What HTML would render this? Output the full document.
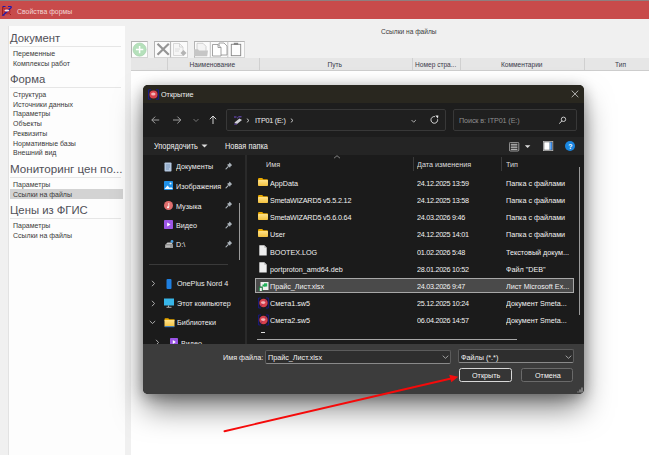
<!DOCTYPE html>
<html><head><meta charset="utf-8">
<style>
*{margin:0;padding:0;box-sizing:border-box}
html,body{width:649px;height:455px;overflow:hidden;background:#f0f0f0;font-family:"Liberation Sans",sans-serif}
.a{position:absolute}
.t{position:absolute;white-space:nowrap;line-height:10px;height:10px}
/* top */
#topline{left:0;top:0;width:649px;height:1px;background:#8f7f7f}
#title{left:0;top:1px;width:649px;height:18px;background:#c84b4b}
#lp{left:8px;top:26px;width:117px;height:429px;background:#fdfdfd;border-left:1px solid #e2e2e2}
.h{font-size:11.3px;color:#505058;line-height:14px;height:14px}
.it{font-size:7px;color:#3a3a3a}
.sep{position:absolute;height:1px;background:#e6e6e6;left:10px;width:111px}
.hd{font-size:6.6px;color:#3a3a4a}
.dt{font-size:8px;color:#f2f2f2;transform:scaleX(0.9);transform-origin:0 0}
.dd{letter-spacing:-0.3px}
</style></head><body>
<div class="a" id="topline"></div>
<div class="a" id="title"></div>
<svg class="a" style="left:0;top:0" width="16" height="18" viewBox="0 0 16 18"><path d="M2.6 7 V15.3 M3 7.5 L11 15" stroke="#9a1a1a" stroke-width="1" fill="none"/><circle cx="7" cy="11" r="3.6" fill="#b8303a"/><path d="M2.5 6.5 H5.5 M8 6.5 H11 L11.3 7.5 L3 15.3 H4.5" stroke="#1a1ab0" stroke-width="1.1" fill="none"/><ellipse cx="6.8" cy="10.6" rx="2.4" ry="1" fill="#f6e0e0"/></svg>
<div class="t" style="left:17px;top:6.5px;font-size:6.9px;color:#f3d6d6">Свойства формы</div>

<div class="a" id="lp"></div>
<div class="t h" style="left:10px;top:31px">Документ</div>
<div class="sep" style="top:46px"></div>
<div class="t it" style="left:13px;top:48.5px">Переменные</div>
<div class="t it" style="left:13px;top:58.5px">Комплексы работ</div>
<div class="t h" style="left:10px;top:72px">Форма</div>
<div class="sep" style="top:87px"></div>
<div class="t it" style="left:13px;top:90px">Структура</div>
<div class="t it" style="left:13px;top:99.7px">Источники данных</div>
<div class="t it" style="left:13px;top:109px">Параметры</div>
<div class="t it" style="left:13px;top:118.6px">Объекты</div>
<div class="t it" style="left:13px;top:128.8px">Реквизиты</div>
<div class="t it" style="left:13px;top:138.7px">Нормативные базы</div>
<div class="t it" style="left:13px;top:148.2px">Внешний вид</div>
<div class="t h" style="left:10px;top:161.5px;font-size:11.6px">Мониторинг цен по...</div>
<div class="sep" style="top:177px"></div>
<div class="t it" style="left:13px;top:179.7px">Параметры</div>
<div class="a" style="left:10px;top:189.2px;width:112.6px;height:9.6px;background:#d3d3d3"></div>
<div class="t it" style="left:13px;top:189.5px">Ссылки на файлы</div>
<div class="t h" style="left:10px;top:203px">Цены из ФГИС</div>
<div class="sep" style="top:218px"></div>
<div class="t it" style="left:13px;top:220.5px">Параметры</div>
<div class="t it" style="left:13px;top:230.6px">Ссылки на файлы</div>


<!-- main area -->
<div class="t" style="left:381px;top:26.5px;font-size:6.6px;color:#3c3c3c">Ссылки на файлы</div>
<div class="a" style="left:131px;top:41px;width:17px;height:16.8px;border:1px solid #d4d4d4;border-top-color:#b4b4b4;border-left-color:#b4b4b4;background:#fdfdfd"></div>
<div class="a" style="left:154px;top:41px;width:33.6px;height:16.8px;border:1px solid #d4d4d4;border-top-color:#b4b4b4;border-left-color:#b4b4b4;background:#fbfbfb"></div>
<div class="a" style="left:193.5px;top:41px;width:51px;height:16.8px;border:1px solid #d4d4d4;border-top-color:#b4b4b4;border-left-color:#b4b4b4;background:#fbfbfb"></div>
<svg class="a" style="left:131px;top:41px" width="114" height="17" viewBox="0 0 114 17">
  <circle cx="8.6" cy="8.6" r="6.6" fill="#b5e0bb" stroke="#9fd0a6" stroke-width="0.6"/>
  <path d="M8.6 4.9 V12.3 M4.9 8.6 H12.3" stroke="#fff" stroke-width="1.5"/>
  <path d="M39.5 0.5 V16.5" stroke="#b8b8b8" stroke-width="1.2"/>
  <path d="M79.3 0.5 V16.5 M96.8 0.5 V16.5" stroke="#c4c4c4" stroke-width="1"/>
  <path d="M26.5 2.8 L37.8 13.8 M37.8 2.8 L26.5 13.8" stroke="#959595" stroke-width="2.2"/>
  <path d="M42.5 2.5 h6 l3.5 3.5 v8.5 h-9.5z" fill="#f6f6f6" stroke="#cfcfcf" stroke-width="0.8"/>
  <path d="M48.5 2.5 v3.5 h3.5" fill="none" stroke="#cfcfcf" stroke-width="0.8"/>
  <path d="M44 8 h5 M44 10 h4" stroke="#d8d8d8" stroke-width="0.8"/>
  <path d="M52.5 9 l3 3 l-3 3 l-3 -3z" fill="#b4b4b4"/>
  <path d="M66 2.3 h6 l3 3 v6.5 h-9z" fill="#f4f4f4" stroke="#c8c8c8" stroke-width="0.8"/>
  <path d="M63 8.3 h4 l1 1.2 h9 l-0.8 5.8 h-13.2z" fill="#c6c6c6"/>
  <path d="M88 2 h5 l3 3 v9 h-8z" fill="#fff" stroke="#8e8e8e" stroke-width="0.8"/>
  <path d="M81.5 3.5 h5.5 l3 3 v8.5 h-8.5z" fill="#fff" stroke="#8e8e8e" stroke-width="0.8"/>
  <path d="M87 3.5 v3 h3" fill="none" stroke="#8e8e8e" stroke-width="0.8"/>
  <rect x="100.3" y="3.3" width="9.4" height="11.4" fill="#fdfdfd" stroke="#858585" stroke-width="0.9"/>
  <rect x="102.8" y="1.8" width="4.4" height="2.2" fill="#858585"/>
</svg>
<div class="a" style="left:131px;top:58px;width:518px;height:12.5px;background:#e6e6e6;border-bottom:1px solid #cdcdcd"></div>
<div class="a" style="left:166.5px;top:58px;width:1px;height:12px;background:#d0d0d0"></div>
<div class="a" style="left:258.5px;top:58px;width:1px;height:12px;background:#d0d0d0"></div>
<div class="a" style="left:411.5px;top:58px;width:1px;height:12px;background:#d0d0d0"></div>
<div class="a" style="left:460px;top:58px;width:1px;height:12px;background:#d0d0d0"></div>
<div class="a" style="left:583.5px;top:58px;width:1px;height:12px;background:#d0d0d0"></div>
<div class="t hd" style="left:189.5px;top:59.5px">Наименование</div>
<div class="t hd" style="left:327.5px;top:59.5px">Путь</div>
<div class="t hd" style="left:415px;top:59.5px">Номер стра...</div>
<div class="t hd" style="left:501px;top:59.5px">Комментарии</div>
<div class="t hd" style="left:615px;top:59.5px">Тип</div>
<div class="a" style="left:131px;top:71px;width:518px;height:384px;background:#fff"></div>

<!-- dialog -->
<svg width="0" height="0" style="position:absolute"><defs><linearGradient id="fg" x1="0" y1="0" x2="0" y2="1"><stop offset="0" stop-color="#ffe28a"/><stop offset="1" stop-color="#f3c13e"/></linearGradient></defs></svg>
<div id="dlg" class="a" style="left:143px;top:85px;width:441px;height:308.5px;border-radius:5px;background:#1b1b1b;overflow:hidden;box-shadow:0 16px 30px -2px rgba(0,0,0,0.5), 0 3px 14px rgba(0,0,0,0.32)">
  <div class="a" style="left:0;top:0;width:441px;height:18.4px;background:#29271f"></div>
  <svg class="a" style="left:4.5px;top:3.5px" width="11" height="11" viewBox="0 0 11 11"><path d="M0.6 0.8 V10.2 H3 M0.6 0.8 H3 M8 0.8 H10.4 V10.2 H8" stroke="#1a1a9a" stroke-width="0.9" fill="none"/><circle cx="5.5" cy="5.5" r="4" fill="#d8404c"/><ellipse cx="5.3" cy="5" rx="2.2" ry="1.5" fill="#f4b4b8"/></svg>
  <div class="t dt" style="left:18px;top:4.7px;color:#f0f0f0">Открытие</div>
  <svg class="a" style="left:428px;top:5px" width="8" height="8" viewBox="0 0 8 8"><path d="M0.7 0.6 L7.3 7.2 M7.3 0.6 L0.7 7.2" stroke="#e0e0e0" stroke-width="0.75"/></svg>

  <div class="a" style="left:0;top:18.4px;width:441px;height:33.3px;background:#1d1d1d"></div>
  <svg class="a" style="left:0;top:28px" width="84" height="14" viewBox="0 0 84 14">
    <path d="M8.8 7 h7.4 M8.8 7 l3.4 -3.4 M8.8 7 l3.4 3.4" stroke="#a0a0a0" stroke-width="1" fill="none"/>
    <path d="M30 7 h7.8 M37.8 7 l-3.4 -3.4 M37.8 7 l-3.4 3.4" stroke="#a0a0a0" stroke-width="1" fill="none"/>
    <path d="M50.5 6 l2.5 2.5 l2.5 -2.5" stroke="#8a8a8a" stroke-width="0.8" fill="none"/>
    <path d="M70 3 v8 M70 3 l-3.2 3.2 M70 3 l3.2 3.2" stroke="#e6e6e6" stroke-width="0.9" fill="none"/>
  </svg>
  <div class="a" style="left:83.4px;top:23.9px;width:219.6px;height:21.8px;border:1px solid #383838;border-radius:2px;background:#1f1f1f"></div>
  <svg class="a" style="left:90px;top:30.5px" width="10" height="9" viewBox="0 0 10 9"><path d="M1.5 6.5 L6.5 2.5 L9 4 L4 8z" fill="#d0d0d8"/><path d="M1.5 6.5 L4 8 L4 8.6 L1.5 7.2z" fill="#8a8a9a"/><path d="M1 1 h2.5 M5.5 0.8 h3" stroke="#7a52e0" stroke-width="0.9"/><path d="M4 2.2 l1.5 -1" stroke="#7a52e0" stroke-width="0.7"/><path d="M1.2 8.2 h2.5" stroke="#6a40c8" stroke-width="0.8"/></svg>
  <svg class="a" style="left:103px;top:33px" width="4" height="5" viewBox="0 0 4 5"><path d="M0.8 0.6 L3 2.5 L0.8 4.4" stroke="#d8d8d8" stroke-width="0.85" fill="none"/></svg>
  <div class="t dt" style="left:111.7px;top:30.50px;color:#ececec;letter-spacing:-0.25px">ITP01 (E:)</div>
  <svg class="a" style="left:147.3px;top:33px" width="4" height="5" viewBox="0 0 4 5"><path d="M0.8 0.6 L3 2.5 L0.8 4.4" stroke="#d8d8d8" stroke-width="0.85" fill="none"/></svg>
  <svg class="a" style="left:267px;top:30px" width="32" height="11" viewBox="0 0 32 11"><path d="M1.5 5 l2.2 2.2 l2.2 -2.2" stroke="#cfcfcf" stroke-width="0.8" fill="none"/><path d="M27.6 4.3 A3.35 3.35 0 1 1 24.9 1.6" stroke="#e2e2e2" stroke-width="0.95" fill="none"/><path d="M25.3 0.6 L28.4 0.5 L27.9 3.6z" fill="#ececec"/></svg>
  <div class="a" style="left:310px;top:23.9px;width:124px;height:21.8px;border:1px solid #383838;border-radius:2px;background:#1f1f1f"></div>
  <div class="t dt" style="left:315.5px;top:30.50px;color:#8e8e8e;letter-spacing:-0.12px">Поиск в: ITP01 (E:)</div>
  <svg class="a" style="left:414.5px;top:31px" width="9" height="9" viewBox="0 0 9 9"><circle cx="5.5" cy="3.3" r="2.2" stroke="#d8d8d8" stroke-width="0.9" fill="none"/><path d="M4 4.8 L1.2 7.6" stroke="#d8d8d8" stroke-width="1"/></svg>

  <div class="a" style="left:0;top:51.7px;width:441px;height:18.3px;background:#242424"></div>
  <div class="t dt" style="left:10.7px;top:57.4px;color:#f0f0f0;font-size:8.2px">Упорядочить</div>
  <svg class="a" style="left:57.5px;top:59px" width="7" height="4" viewBox="0 0 7 4"><path d="M0.5 0.5 h6 l-3 3z" fill="#dcdcdc"/></svg>
  <div class="t dt" style="left:81.6px;top:57.3px;color:#f0f0f0;font-size:8.2px">Новая папка</div>
  <svg class="a" style="left:365.7px;top:56.5px" width="23" height="10" viewBox="0 0 23 10"><rect x="0.4" y="0.4" width="9.4" height="8.6" rx="1" fill="none" stroke="#b8b8b8" stroke-width="0.8"/><path d="M1.8 2.3 h6.6 M1.8 4 h6.6 M1.8 5.7 h6.6 M1.8 7.4 h6.6" stroke="#d4d4d4" stroke-width="0.9"/><path d="M15.8 3.3 h5.6 l-2.8 2.8z" fill="#dcdcdc"/></svg>
  <svg class="a" style="left:399.8px;top:56.2px" width="11" height="10" viewBox="0 0 11 10"><defs><linearGradient id="pg" x1="0" x2="1"><stop offset="0" stop-color="#9fd0ff"/><stop offset="1" stop-color="#1a6fd6"/></linearGradient></defs><rect x="0.4" y="0.4" width="9.4" height="9.2" fill="#2a2a2a" stroke="#b8b8b8" stroke-width="0.8"/><rect x="1.2" y="1.2" width="5.4" height="7.6" fill="#ffffff"/><rect x="6.6" y="1.2" width="2.4" height="7.6" fill="url(#pg)"/></svg>
  <div class="a" style="left:422px;top:56.2px;width:10px;height:10px;border-radius:50%;background:#1a86e0"></div>
  <div class="t" style="left:425.3px;top:56.5px;font-size:7px;font-weight:bold;color:#fff">?</div>

  <div class="a" style="left:101.7px;top:70px;width:2.2px;height:189px;background:#2a2a2a"></div>
  <svg class="a" style="left:190px;top:70px" width="8" height="4" viewBox="0 0 8 4"><path d="M1 3.2 l3 -2.5 l3 2.5" stroke="#9a9a9a" stroke-width="0.8" fill="none"/></svg>
  <div class="t dt" style="left:122.5px;top:75.30px;color:#dcdcdc">Имя</div>
  <div class="a" style="left:269.8px;top:72px;width:1px;height:14px;background:#3a3a3a"></div>
  <div class="t dt" style="left:274px;top:75.30px;color:#dcdcdc">Дата изменения</div>
  <div class="a" style="left:358px;top:72px;width:1px;height:14px;background:#3a3a3a"></div>
  <div class="t dt" style="left:362.5px;top:75.30px;color:#dcdcdc">Тип</div>
  <div class="a" style="left:435.5px;top:81.7px;width:1.3px;height:148px;background:#9a9a9a"></div>

  <div class="a" style="left:112.3px;top:192.9px;width:318.6px;height:15px;border:1px solid #a8a8a8;background:#4a4a4a"></div>
<svg class="a" style="left:114.8px;top:92.7px" width="10" height="9" viewBox="0 0 10 9"><defs></defs><path d="M0 1.2 Q0 0 1.2 0 H4.2 L5.4 1.2 H9 Q10 1.2 10 2.2 V3 H0z" fill="#e8a800"/><rect x="0" y="2" width="10" height="6" rx="0.8" fill="url(#fg)"/></svg>
  <div class="t dt" style="left:127.2px;top:94.10px">AppData</div><div class="t dt dd" style="left:274.3px;top:94.10px">24.12.2025 13:59</div><div class="t dt" style="left:362.5px;top:94.10px">Папка с файлами</div>
<svg class="a" style="left:114.8px;top:109.8px" width="10" height="9" viewBox="0 0 10 9"><defs></defs><path d="M0 1.2 Q0 0 1.2 0 H4.2 L5.4 1.2 H9 Q10 1.2 10 2.2 V3 H0z" fill="#e8a800"/><rect x="0" y="2" width="10" height="6" rx="0.8" fill="url(#fg)"/></svg>
  <div class="t dt" style="left:127.2px;top:111.20px;letter-spacing:-0.18px">SmetaWIZARD5 v5.5.2.12</div><div class="t dt dd" style="left:274.3px;top:111.20px">24.12.2025 13:58</div><div class="t dt" style="left:362.5px;top:111.20px">Папка с файлами</div>
<svg class="a" style="left:114.8px;top:126.9px" width="10" height="9" viewBox="0 0 10 9"><defs></defs><path d="M0 1.2 Q0 0 1.2 0 H4.2 L5.4 1.2 H9 Q10 1.2 10 2.2 V3 H0z" fill="#e8a800"/><rect x="0" y="2" width="10" height="6" rx="0.8" fill="url(#fg)"/></svg>
  <div class="t dt" style="left:127.2px;top:128.30px;letter-spacing:-0.18px">SmetaWIZARD5 v5.6.0.64</div><div class="t dt dd" style="left:274.3px;top:128.30px">24.03.2026 9:46</div><div class="t dt" style="left:362.5px;top:128.30px">Папка с файлами</div>
<svg class="a" style="left:114.8px;top:144.0px" width="10" height="9" viewBox="0 0 10 9"><defs></defs><path d="M0 1.2 Q0 0 1.2 0 H4.2 L5.4 1.2 H9 Q10 1.2 10 2.2 V3 H0z" fill="#e8a800"/><rect x="0" y="2" width="10" height="6" rx="0.8" fill="url(#fg)"/></svg>
  <div class="t dt" style="left:127.2px;top:145.40px">User</div><div class="t dt dd" style="left:274.3px;top:145.40px">24.12.2025 14:01</div><div class="t dt" style="left:362.5px;top:145.40px">Папка с файлами</div>
<svg class="a" style="left:115.8px;top:160.2px" width="8" height="11" viewBox="0 0 8 11"><path d="M0.3 0.3 h5 l2.4 2.4 v7.8 h-7.4z" fill="#eeeeee"/><path d="M5.3 0.3 v2.4 h2.4z" fill="#b8b8b8"/></svg>
  <div class="t dt" style="left:127.2px;top:162.50px">BOOTEX.LOG</div><div class="t dt dd" style="left:274.3px;top:162.50px">01.02.2026 5:48</div><div class="t dt" style="left:362.5px;top:162.50px">Текстовый докум...</div>
<svg class="a" style="left:115.8px;top:177.3px" width="8" height="11" viewBox="0 0 8 11"><path d="M0.3 0.3 h5 l2.4 2.4 v7.8 h-7.4z" fill="#eeeeee"/><path d="M5.3 0.3 v2.4 h2.4z" fill="#b8b8b8"/></svg>
  <div class="t dt" style="left:127.2px;top:179.60px">portproton_amd64.deb</div><div class="t dt dd" style="left:274.3px;top:179.60px">28.01.2026 10:52</div><div class="t dt" style="left:362.5px;top:179.60px">Файл "DEB"</div>
<svg class="a" style="left:114.5px;top:195.6px" width="11" height="11" viewBox="0 0 11 11"><rect x="2.5" y="1" width="8" height="8" fill="#f0f0f0"/><path d="M4.5 5.5 h3 v-2 h-3z" fill="#1fa855"/><rect x="6" y="2.3" width="3.2" height="3.2" fill="#21b35a"/><rect x="0.8" y="5.5" width="4" height="4.5" fill="#1a7a3e"/><rect x="1.8" y="6.8" width="2" height="3.2" fill="#f0f0f0"/></svg>
  <div class="t dt" style="left:127.2px;top:196.70px">Прайс_Лист.xlsx</div><div class="t dt dd" style="left:274.3px;top:196.70px">24.03.2026 9:47</div><div class="t dt" style="left:362.5px;top:196.70px">Лист Microsoft Ex...</div>
<svg class="a" style="left:114.5px;top:212.2px" width="11" height="12" viewBox="0 0 11 12"><path d="M0.6 1 V11 H3 M0.6 1 H3 M8 1 H10.4 V11 H8" stroke="#1a1a8a" stroke-width="0.9" fill="none"/><circle cx="5.5" cy="6" r="4.2" fill="#d8404c"/><path d="M1.5 10.5 L9.5 1.5" stroke="#2a1a8a" stroke-width="0.6" opacity="0.6"/><ellipse cx="5.2" cy="5.6" rx="2.2" ry="1.4" fill="#f4b4b8"/></svg>
  <div class="t dt" style="left:127.2px;top:213.80px">Смета1.sw5</div><div class="t dt dd" style="left:274.3px;top:213.80px">25.12.2025 10:24</div><div class="t dt" style="left:362.5px;top:213.80px">Документ Smeta...</div>
<svg class="a" style="left:114.5px;top:229.3px" width="11" height="12" viewBox="0 0 11 12"><path d="M0.6 1 V11 H3 M0.6 1 H3 M8 1 H10.4 V11 H8" stroke="#1a1a8a" stroke-width="0.9" fill="none"/><circle cx="5.5" cy="6" r="4.2" fill="#d8404c"/><path d="M1.5 10.5 L9.5 1.5" stroke="#2a1a8a" stroke-width="0.6" opacity="0.6"/><ellipse cx="5.2" cy="5.6" rx="2.2" ry="1.4" fill="#f4b4b8"/></svg>
  <div class="t dt" style="left:127.2px;top:230.90px">Смета2.sw5</div><div class="t dt dd" style="left:274.3px;top:230.90px">06.04.2026 14:57</div><div class="t dt" style="left:362.5px;top:230.90px">Документ Smeta...</div>

  <div class="a" style="left:118px;top:247px;width:4px;height:1px;background:#e0e0e0"></div>
  <div class="a" style="left:114px;top:253.5px;width:260px;height:1.3px;background:#a8a8a8"></div>

  <svg class="a" style="left:21px;top:76.5px" width="8" height="10" viewBox="0 0 8 10"><rect x="0.5" y="0.5" width="7" height="9" rx="0.8" fill="#b4c8e0"/><path d="M2 3 h4 M2 5 h4 M2 7 h3" stroke="#5f7fa6" stroke-width="0.7"/></svg><div class="t dt" style="left:33px;top:77.20px;color:#ececec">Документы</div><svg class="a" style="left:82.3px;top:76.6px" width="8" height="8" viewBox="0 0 8 8"><path d="M4.6 0.6 L7.2 3.2 L5.8 4 L5 5.8 L2 2.8 L3.8 2 Z" fill="#a9b1b8"/><path d="M3.2 4.6 L1 6.8" stroke="#a9b1b8" stroke-width="1.1" stroke-linecap="round"/></svg>
<svg class="a" style="left:21px;top:95.8px" width="9" height="9" viewBox="0 0 9 9"><rect x="0" y="0" width="9" height="9" rx="0.8" fill="#1e90e8"/><path d="M0.5 8 l3 -3.5 l2.5 2.5 l1 -1 l2 2z" fill="#f0f8ff"/><circle cx="6.5" cy="2.5" r="1" fill="#e6f4ff"/></svg><div class="t dt" style="left:33px;top:96.50px;color:#ececec">Изображения</div><svg class="a" style="left:82.3px;top:95.9px" width="8" height="8" viewBox="0 0 8 8"><path d="M4.6 0.6 L7.2 3.2 L5.8 4 L5 5.8 L2 2.8 L3.8 2 Z" fill="#a9b1b8"/><path d="M3.2 4.6 L1 6.8" stroke="#a9b1b8" stroke-width="1.1" stroke-linecap="round"/></svg>
<svg class="a" style="left:21px;top:116.0px" width="9" height="9" viewBox="0 0 9 9"><circle cx="4.5" cy="4.5" r="4.5" fill="#e06e6e"/><path d="M4.8 2 v4.2" stroke="#fff" stroke-width="0.8"/><circle cx="4" cy="6.3" r="1" fill="#fff"/></svg><div class="t dt" style="left:33px;top:116.70px;color:#ececec">Музыка</div><svg class="a" style="left:82.3px;top:116.1px" width="8" height="8" viewBox="0 0 8 8"><path d="M4.6 0.6 L7.2 3.2 L5.8 4 L5 5.8 L2 2.8 L3.8 2 Z" fill="#a9b1b8"/><path d="M3.2 4.6 L1 6.8" stroke="#a9b1b8" stroke-width="1.1" stroke-linecap="round"/></svg>
<svg class="a" style="left:21px;top:135.4px" width="9" height="9" viewBox="0 0 9 9"><rect x="0" y="0" width="9" height="9" rx="0.8" fill="#9b55e6"/><path d="M3.2 2.5 l3.3 2 l-3.3 2z" fill="#fff"/></svg><div class="t dt" style="left:33px;top:136.10px;color:#ececec">Видео</div><svg class="a" style="left:82.3px;top:135.5px" width="8" height="8" viewBox="0 0 8 8"><path d="M4.6 0.6 L7.2 3.2 L5.8 4 L5 5.8 L2 2.8 L3.8 2 Z" fill="#a9b1b8"/><path d="M3.2 4.6 L1 6.8" stroke="#a9b1b8" stroke-width="1.1" stroke-linecap="round"/></svg>
<svg class="a" style="left:20.5px;top:154.5px" width="10" height="9" viewBox="0 0 10 9"><path d="M1 4.5 h8 v3.5 h-8z" fill="#9a9a9a"/><path d="M1.5 4.5 l2 -2 h4 l1.5 2" fill="#c8c8c8"/><circle cx="8" cy="1.5" r="1.4" fill="#4aa0e0"/><path d="M2 6.2 h4" stroke="#e0e0e0" stroke-width="0.7"/></svg><div class="t dt" style="left:33px;top:155.20px;color:#ececec">D:\</div><svg class="a" style="left:82.3px;top:154.6px" width="8" height="8" viewBox="0 0 8 8"><path d="M4.6 0.6 L7.2 3.2 L5.8 4 L5 5.8 L2 2.8 L3.8 2 Z" fill="#a9b1b8"/><path d="M3.2 4.6 L1 6.8" stroke="#a9b1b8" stroke-width="1.1" stroke-linecap="round"/></svg>
<div class="a" style="left:96px;top:118px;width:1.2px;height:57px;background:#9a9a9a"></div><div class="a" style="left:6.4px;top:179px;width:79px;height:1px;background:#3a3a3a"></div><svg class="a" style="left:8px;top:194.9px" width="5" height="7" viewBox="0 0 5 7"><path d="M1 0.8 l2.5 2.7 l-2.5 2.7" stroke="#cfcfcf" stroke-width="0.8" fill="none"/></svg><svg class="a" style="left:22.5px;top:193.5px" width="6" height="10" viewBox="0 0 6 10"><rect x="0.5" y="0" width="5" height="10" rx="1" fill="#1e7fe0"/></svg><div class="t dt" style="left:33.9px;top:193.7px;color:#ececec">OnePlus Nord 4</div>
<svg class="a" style="left:8px;top:214.7px" width="5" height="7" viewBox="0 0 5 7"><path d="M1 0.8 l2.5 2.7 l-2.5 2.7" stroke="#cfcfcf" stroke-width="0.8" fill="none"/></svg><svg class="a" style="left:20.5px;top:213px" width="10" height="10" viewBox="0 0 10 10"><rect x="0" y="0.5" width="10" height="7" fill="#38b6e8"/><path d="M4.5 7.5 v1.5 M2.5 9.3 h5" stroke="#cfcfcf" stroke-width="0.8"/></svg><div class="t dt" style="left:33.9px;top:213.5px;color:#ececec">Этот компьютер</div>
<svg class="a" style="left:6px;top:235.0px" width="7" height="5" viewBox="0 0 7 5"><path d="M0.8 1 l2.7 2.5 l2.7 -2.5" stroke="#cfcfcf" stroke-width="0.8" fill="none"/></svg><svg class="a" style="left:20.5px;top:233px" width="11" height="10" viewBox="0 0 11 10"><path d="M0.5 1.2 Q0.5 0.3 1.4 0.3 H4.2 L5.3 1.3 H10.5 V3 H0.5z" fill="#e8a800"/><rect x="0.5" y="2" width="10" height="6.8" rx="0.6" fill="url(#fg)"/><rect x="0.8" y="8.2" width="9.4" height="1" fill="#2a78d0"/></svg><div class="t dt" style="left:33.9px;top:233.2px;color:#ececec">Библиотеки</div>
<svg class="a" style="left:12px;top:253.5px" width="5" height="7" viewBox="0 0 5 7"><path d="M1 0.8 l2.5 2.7 l-2.5 2.7" stroke="#cfcfcf" stroke-width="0.8" fill="none"/></svg><svg class="a" style="left:27px;top:252.5px" width="8" height="8" viewBox="0 0 8 8"><rect x="0" y="0" width="8" height="8" rx="0.8" fill="#9b55e6"/><path d="M2.8 2 l3 2 l-3 2z" fill="#fff"/></svg><div class="t dt" style="left:38px;top:253.50px;color:#ececec">Видео</div>


  <div class="a" style="left:0;top:259px;width:441px;height:49.5px;background:#3c3c3c"></div>
  <div class="t dt" style="left:79.6px;top:268.10px;color:#f0f0f0">Имя файла:</div>
  <div class="a" style="left:122px;top:264.6px;width:186px;height:14.6px;border:1px solid #5c5c5c;border-bottom-color:#8a8a8a;border-radius:2px;background:#2e2e2e"></div>
  <div class="t dt" style="left:124.7px;top:267.80px;color:#f4f4f4">Прайс_Лист.xlsx</div>
  <svg class="a" style="left:299px;top:270px" width="7" height="4" viewBox="0 0 7 4"><path d="M0.7 0.7 l2.8 2.6 l2.8 -2.6" stroke="#bdbdbd" stroke-width="0.8" fill="none"/></svg>
  <div class="a" style="left:315.4px;top:264.4px;width:115.3px;height:14px;border:1px solid #5c5c5c;border-bottom-color:#8a8a8a;border-radius:2px;background:#2e2e2e"></div>
  <div class="t dt" style="left:317.8px;top:267.80px;color:#f4f4f4">Файлы (*.*)</div>
  <svg class="a" style="left:422px;top:270px" width="7" height="4" viewBox="0 0 7 4"><path d="M0.7 0.7 l2.8 2.6 l2.8 -2.6" stroke="#bdbdbd" stroke-width="0.8" fill="none"/></svg>
  <div class="a" style="left:316.1px;top:283.4px;width:52.8px;height:14px;border:1px solid #d8d8d8;border-radius:2.5px;background:#353535"></div>
  <div class="t dt" style="left:328.5px;top:286.10px;color:#f4f4f4">Открыть</div>
  <div class="a" style="left:377.5px;top:283.4px;width:52px;height:14px;border:1px solid #6a6a6a;border-radius:2.5px;background:#353535"></div>
  <div class="t dt" style="left:391.5px;top:286.10px;color:#f4f4f4">Отмена</div>
  <svg class="a" style="left:434px;top:302px" width="6" height="6" viewBox="0 0 6 6"><rect x="4.5" y="0.5" width="1" height="5" fill="#bbb"/><rect x="2.5" y="2.5" width="1" height="3" fill="#bbb"/><rect x="0.5" y="4.5" width="1" height="1" fill="#bbb"/></svg>
</div>

<!-- arrow -->
<svg class="a" style="left:0;top:0" width="649" height="455" viewBox="0 0 649 455">
  <path d="M224.5 431.2 L450 378.8" stroke="#f50a0a" stroke-width="1.9" stroke-linecap="round"/>
  <path d="M458.3 376.7 L449.2 374.8 L451.3 382.2 Z" fill="#f20d0d"/>
</svg>
</body></html>
